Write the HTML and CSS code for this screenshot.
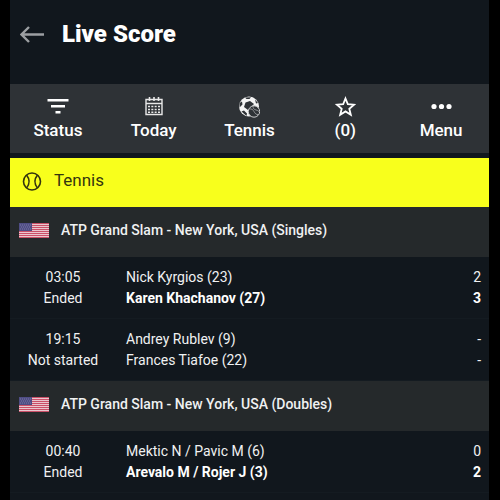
FILE: index.html
```html
<!DOCTYPE html>
<html lang="en">
<head>
    <meta charset="UTF-8">
    <meta name="viewport" content="width=device-width, initial-scale=1.0">
    <title>Live Score</title>
    <link rel="stylesheet" href="styles.css">
</head>
<body>
    <!-- Shared flag -->
    <svg class="defs" width="0" height="0" aria-hidden="true">
        <symbol id="flag-us" viewBox="0 0 30 15">
            <rect width="30" height="15" fill="#eac6ce"/>
            <path d="M0 .5h30M0 2.500h30M0 4.500h30M0 6.500h30M0 8.500h30M0 10.500h30M0 12.500h30M0 14.500h30" stroke="#cb5068" stroke-width="1"/>
            <rect width="13" height="8" fill="#4f4d84"/>
            <path d="M1 2h11M2 4h10M1 6h11" stroke="#8583ad" stroke-width=".8" stroke-dasharray="1 1"/>
        </symbol>
    </svg>

    <div class="app">
        <header class="header">
            <a class="back" href="#" aria-label="Back">
                <svg width="25" height="18" viewBox="0 0 25 18" fill="none" stroke="#9c9fa2" stroke-width="2.400">
                    <path d="M24 9.500H2M9 2L1.500 9.500L9 17"/>
                </svg>
            </a>
            <h1>Live Score</h1>
        </header>

        <nav class="toolbar">
            <button type="button">
                <svg width="22" height="22" viewBox="0 0 22 22" fill="#fff">
                    <path d="M.5 3h21v2.500H.5zM4 9h14v2.500H4zM8.500 15h5v2.500h-5z"/>
                </svg>
                Status
            </button>
            <button type="button">
                <svg width="22" height="22" viewBox="0 0 22 22" fill="none" stroke="#e8e8e8">
                    <path d="M3 3.500h16v15H3zM3 7.500h16" stroke-width="1.400"/>
                    <path d="M6.500 1v4M11 1v4M15.500 1v4" stroke-width="1.600"/>
                    <path d="M5 10.500h12M5 13.500h12M5 16.200h12" stroke-width="1.500" stroke-dasharray="2 1.330"/>
                </svg>
                Today
            </button>
            <button type="button">
                <svg width="22" height="22" viewBox="0 0 22 22">
                    <circle cx="11" cy="10.500" r="10" fill="#f4f4f4"/>
                    <path d="M7.500 6.500L12 5L16 8L13.500 10.500L10 14L6 11zM7 1.500L13 1.200L11.500 3L8.500 3zM1.500 7L4 5.500L4.500 8.500L1.500 11.500zM3.500 15.500L6 14.500L9 17.500L8.500 20zM17 3.500L20 7L18 7.500z" fill="#2e3236"/>
                    <circle cx="16" cy="15.500" r="5.700" fill="#2e3236" stroke="#c9cacb"/>
                    <path d="M11 13c3-.5 4 .8 5 2.500s2 3.500 4.500 3M15 10c0 2.500 1 3.500 3 4s3 1 3 2" fill="none" stroke="#a8aaac" stroke-width=".8"/>
                </svg>
                Tennis
            </button>
            <button type="button">
                <svg width="22" height="22" viewBox="0 0 22 22" fill="none" stroke="#fff" stroke-width="1.800">
                    <path d="M11.500 2.500l2.300 5.700 6.200.5-4.700 4 1.500 6-5.300-3.300-5.300 3.300 1.500-6-4.700-4 6.200-.5z"/>
                </svg>
                (0)
            </button>
            <button type="button">
                <svg width="22" height="22" viewBox="0 0 22 22" fill="#fff">
                    <circle cx="4" cy="10.500" r="2.600"/>
                    <circle cx="11.500" cy="10.500" r="2.600"/>
                    <circle cx="19" cy="10.500" r="2.600"/>
                </svg>
                Menu
            </button>
        </nav>

        <h2 class="sport">
            <svg width="20" height="20" viewBox="0 0 20 20" fill="none" stroke="#34350f" stroke-width="1.600">
                <circle cx="10" cy="10.500" r="8.500"/>
                <path d="M4.500 4c3.200 4 3.200 9 0 13M15.500 4c-3.200 4-3.200 9 0 13"/>
            </svg>
            Tennis
        </h2>

        <section>
            <h3 class="league">
                <svg width="30" height="15"><use href="#flag-us"/></svg>
                ATP Grand Slam - New York, USA (Singles)
            </h3>
            <table class="matches">
                <tr>
                    <td class="time">03:05<br>Ended</td>
                    <td>Nick Kyrgios (23)<br><b>Karen Khachanov (27)</b></td>
                    <td class="score">2<br><b>3</b></td>
                </tr>
                <tr>
                    <td class="time">19:15<br>Not started</td>
                    <td>Andrey Rublev (9)<br>Frances Tiafoe (22)</td>
                    <td class="score">-<br>-</td>
                </tr>
            </table>
        </section>

        <section>
            <h3 class="league">
                <svg width="30" height="15"><use href="#flag-us"/></svg>
                ATP Grand Slam - New York, USA (Doubles)
            </h3>
            <table class="matches">
                <tr>
                    <td class="time">00:40<br>Ended</td>
                    <td>Mektic N / Pavic M (6)<br><b>Arevalo M / Rojer J (3)</b></td>
                    <td class="score">0<br><b>2</b></td>
                </tr>
            </table>
        </section>
    </div>
</body>
</html>
```
FILE: styles.css
```css
* {
    box-sizing: border-box;
}
body {
    margin: 0;
    padding: 0 11px 0 10px;
    background: #000;
    color: #f0f1f2;
    font-family: Roboto, sans-serif;
    font-size: 14px;
    line-height: 21px;
}
h1, h2, h3 {
    margin: 0;
}
.defs {
    display: block;
}
.app {
    min-height: 100vh;
    background: #11171d;
}
.header {
    display: flex;
    align-items: center;
    gap: 17px;
    height: 84px;
    padding: 0 10px 16px;
}
.back {
    display: flex;
}
.header h1 {
    color: #fff;
    font-size: 24px;
    font-weight: 900;
    line-height: 32px;
}
.toolbar {
    display: flex;
    margin-bottom: 5px;
    background: #2e3236;
}
.toolbar button {
    flex: 1;
    display: flex;
    flex-direction: column;
    align-items: center;
    gap: 2px;
    padding: 12px 0;
    border: none;
    background: none;
    color: #fff;
    font-family: inherit;
    font-size: 17px;
    font-weight: 500;
    line-height: 21px;
    cursor: pointer;
}
.sport {
    display: flex;
    align-items: center;
    gap: 12px;
    padding: 10px 12px 14px;
    background: #f8ff1c;
    color: #34350f;
    font-size: 17px;
    font-weight: 400;
    line-height: 25px;
}
.league {
    display: flex;
    align-items: center;
    gap: 12px;
    padding: 13px 9px 16px;
    background: #25292b;
    font-size: 14px;
    font-weight: 500;
}
.matches {
    width: 100%;
    border-spacing: 0;
}
.matches td {
    padding: 10px 0 9px;
    border-bottom: 1px solid #141b21;
}
.matches .time {
    width: 116px;
    padding-right: 10px;
    text-align: center;
}
.matches .score {
    width: 30px;
    padding-right: 8px;
    text-align: right;
}
.matches b {
    color: #fff;
    font-weight: 700;
}
```
